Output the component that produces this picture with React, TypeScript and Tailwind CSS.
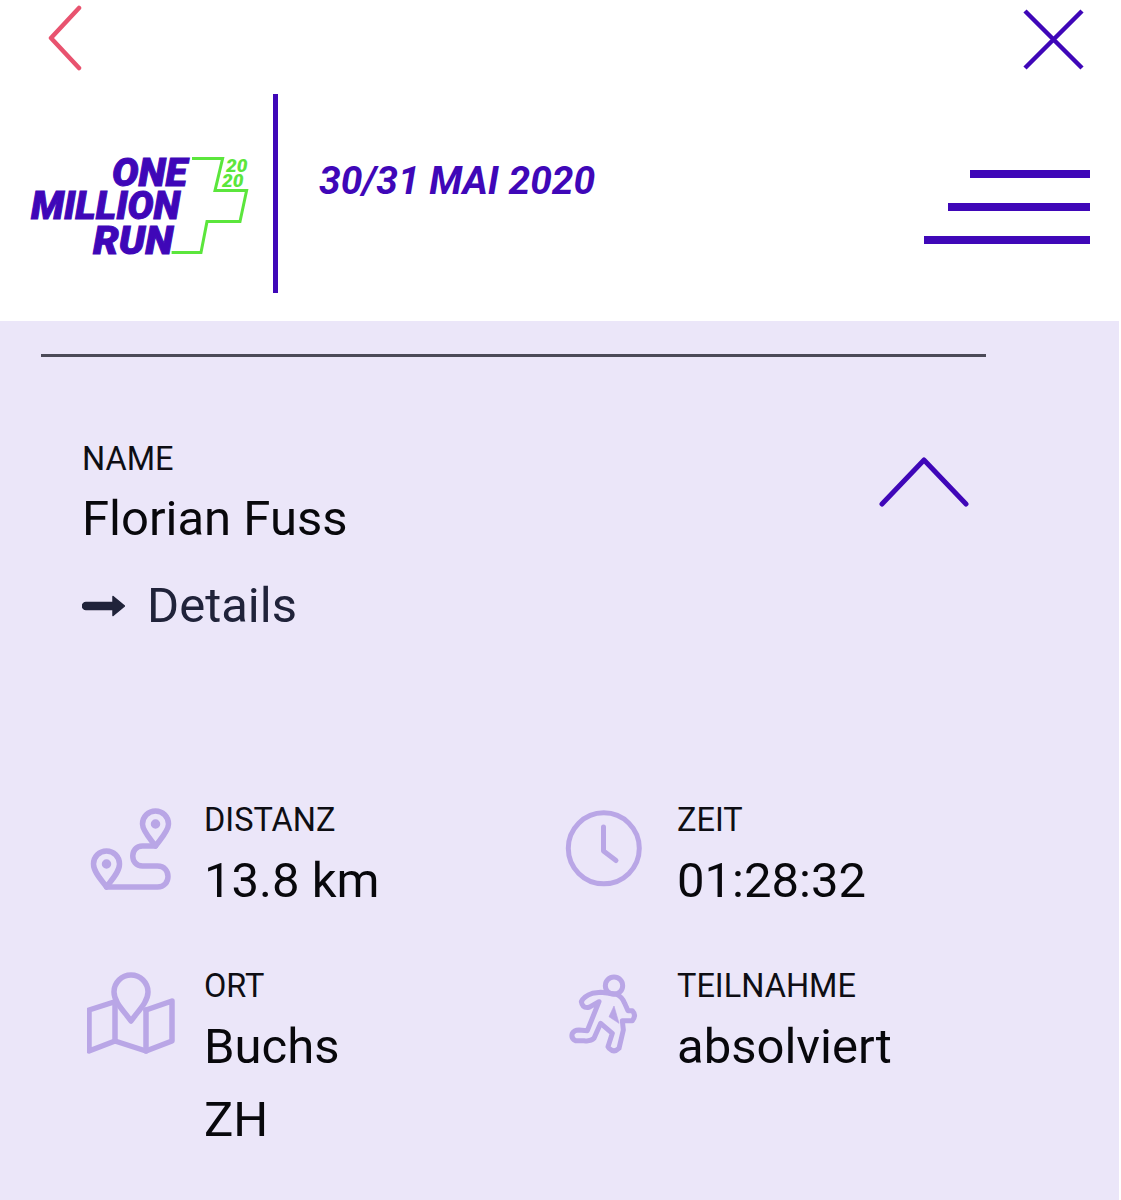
const PURPLE = '#3f07b8';
const LILAC = '#b9a6e6';

function Logo() {
  return (
    <svg width="236" height="120" viewBox="24 146 236 120" className="shrink-0">
      <path
        d="M192 158.6H222.6L215 190.6H246.6L240 221.6H207L201 252.6H171.6"
        fill="none"
        stroke="#5be63c"
        strokeWidth="3"
      />
      <g fill={PURPLE} stroke={PURPLE} strokeWidth="1" fontFamily="Roboto, sans-serif" fontWeight="900" fontStyle="italic" fontSize="39">
        <text x="112" y="186" textLength="75" lengthAdjust="spacingAndGlyphs">ONE</text>
        <text x="31" y="219" textLength="149" lengthAdjust="spacingAndGlyphs">MILLION</text>
        <text x="93" y="254" textLength="80" lengthAdjust="spacingAndGlyphs">RUN</text>
      </g>
      <g fill="#5be63c" fontFamily="Roboto, sans-serif" fontWeight="900" fontStyle="italic" fontSize="19">
        <text x="226" y="172">20</text>
        <text x="222" y="187">20</text>
      </g>
    </svg>
  );
}

function RouteIcon() {
  return (
    <svg width="90" height="90" viewBox="86.5 804 90 90" fill="none" stroke={LILAC} strokeWidth="5.5" strokeLinecap="round" strokeLinejoin="round">
      <path d="M155 845C150 838 142 830 142 823A13 13 0 0 1 168 823C168 830 160 838 155 845Z" />
      <path d="M106 886C101 879 93 871 93 863A13 13 0 0 1 119 863C119 871 111 879 106 886Z" />
      <path d="M155 845H142C129 845 129 865 142 865H157C171 865 171 886 157 886H106" />
      <circle cx="155" cy="823" r="2" fill={LILAC} />
      <circle cx="106" cy="863" r="2" fill={LILAC} />
    </svg>
  );
}

function MapIcon() {
  return (
    <svg width="90" height="90" viewBox="87 972 90 90" fill="none" stroke={LILAC} strokeWidth="5.5" strokeLinecap="round" strokeLinejoin="round">
      <path d="M131 1022C124 1012 114 1003 114 993A17 17 0 0 1 148 993C148 1003 138 1012 131 1022Z" />
      <path d="M114 1003L89 1011V1052L115 1042L146 1052L172 1042V1002L146 1011" />
      <path d="M115 1003V1042M146 1011V1052" />
    </svg>
  );
}

function ClockIcon() {
  return (
    <svg width="90" height="90" viewBox="559.5 805 90 90" fill="none" stroke={LILAC} strokeWidth="5" strokeLinecap="round" strokeLinejoin="round">
      <circle cx="603.3" cy="848.3" r="35.5" />
      <path d="M603 827V851L615.5 860.5" />
    </svg>
  );
}

function RunnerIcon() {
  return (
    <svg width="90" height="90" viewBox="28 543 270 270" fill="none" stroke={LILAC} strokeWidth="15" strokeLinejoin="round">
      <circle cx="190" cy="587" r="26" />
      <path d="M150 607L195 612Q215 620 222 640L232 662H245Q258 675 245 692H215L218 720L205 775Q190 790 175 775L172 770L185 730L150 700L130 745Q120 755 100 752H75Q60 745 65 730Q70 720 85 720L110 722L145 635L115 652Q95 655 92 635Q100 618 125 610Z" />
      <path d="M190 648L205 700L175 680Z" fill={LILAC} strokeWidth="2" />
    </svg>
  );
}

function Stat({ icon, label, children }: { icon: React.ReactNode; label: string; children: React.ReactNode }) {
  return (
    <div className="flex items-start">
      <div className="w-[117px] shrink-0 pt-[5px]">{icon}</div>
      <div>
        <div className="text-[32.5px] leading-[40px] text-[#0e0e14]">{label}</div>
        <div className="mt-[4px] text-[49px] leading-[73px] text-[#08080c]">{children}</div>
      </div>
    </div>
  );
}

export default function App() {
  return (
    <div className="w-[1121px] h-[1200px] overflow-hidden bg-white font-['Roboto',sans-serif]">
      <header className="h-[321px] flex flex-col">
        <div className="h-[94px] flex justify-between pl-[48px] pr-[36px] pt-[5px]">
          <svg width="34" height="68" viewBox="48 5 34 68" fill="none" stroke="#e8536f" strokeWidth="4.5" strokeLinecap="round" strokeLinejoin="round">
            <path d="M79 8L51 38L79 68" />
          </svg>
          <svg width="64" height="66" viewBox="1022 5 64 66" fill="none" stroke={PURPLE} strokeWidth="4.5">
            <path d="M1026 11L1083 68M1083 11L1026 68" />
          </svg>
        </div>
        <div className="flex items-start">
          <div className="ml-[24px] mt-[52px]">
            <Logo />
          </div>
          <div className="ml-[13px] w-[5px] h-[199px] bg-[#3f07b8] shrink-0" />
          <div className="ml-[41px] mt-[64px] text-[38.9px] leading-[46px] font-bold italic text-[#3f07b8] whitespace-nowrap">
            30/31 MAI 2020
          </div>
          <div className="ml-auto mr-[31px] mt-[76px] w-[167px] flex flex-col items-end gap-[25px]">
            <div className="w-[120px] h-[8px] bg-[#3f07b8]" />
            <div className="w-[142px] h-[8px] bg-[#3f07b8]" />
            <div className="w-[166px] h-[8px] bg-[#3f07b8]" />
          </div>
        </div>
      </header>

      <main className="w-[1119px] h-[879px] bg-[#ebe6f9] pt-[33px]">
        <div className="ml-[41px] w-[945px] h-[3px] bg-[#4b4a58]" />

        <div className="mt-[82px] pl-[82px] pr-[150px] flex justify-between items-start">
          <div>
            <div className="text-[32.5px] leading-[40px] text-[#0e0e14]">NAME</div>
            <div className="mt-[12px] text-[49px] leading-[56px] text-[#08080c]">Florian Fuss</div>
            <div className="mt-[31px] flex items-center gap-[22px] text-[49px] leading-[56px] text-[#20233a]">
              <svg width="43" height="24" viewBox="81 591 43 24" fill="#20233a" stroke="#20233a" strokeWidth="1.5" strokeLinejoin="round">
                <path d="M85 599.5H112V593.5L123.5 603L112 612.5V606.5H85A3.5 3.5 0 0 1 85 599.5Z" />
              </svg>
              Details
            </div>
          </div>
          <svg className="mt-[18px]" width="90" height="52" viewBox="879 456 90 52" fill="none" stroke={PURPLE} strokeWidth="5" strokeLinecap="round" strokeLinejoin="round">
            <path d="M882 503L924 459L966 503" />
          </svg>
        </div>

        <div className="mt-[166px] pl-[87px] grid grid-cols-[473px_1fr] gap-y-[49px]">
          <Stat icon={<RouteIcon />} label="DISTANZ">13.8 km</Stat>
          <Stat icon={<ClockIcon />} label="ZEIT">01:28:32</Stat>
          <Stat icon={<MapIcon />} label="ORT">
            Buchs
            <br />
            ZH
          </Stat>
          <Stat icon={<RunnerIcon />} label="TEILNAHME">absolviert</Stat>
        </div>
      </main>
    </div>
  );
}
